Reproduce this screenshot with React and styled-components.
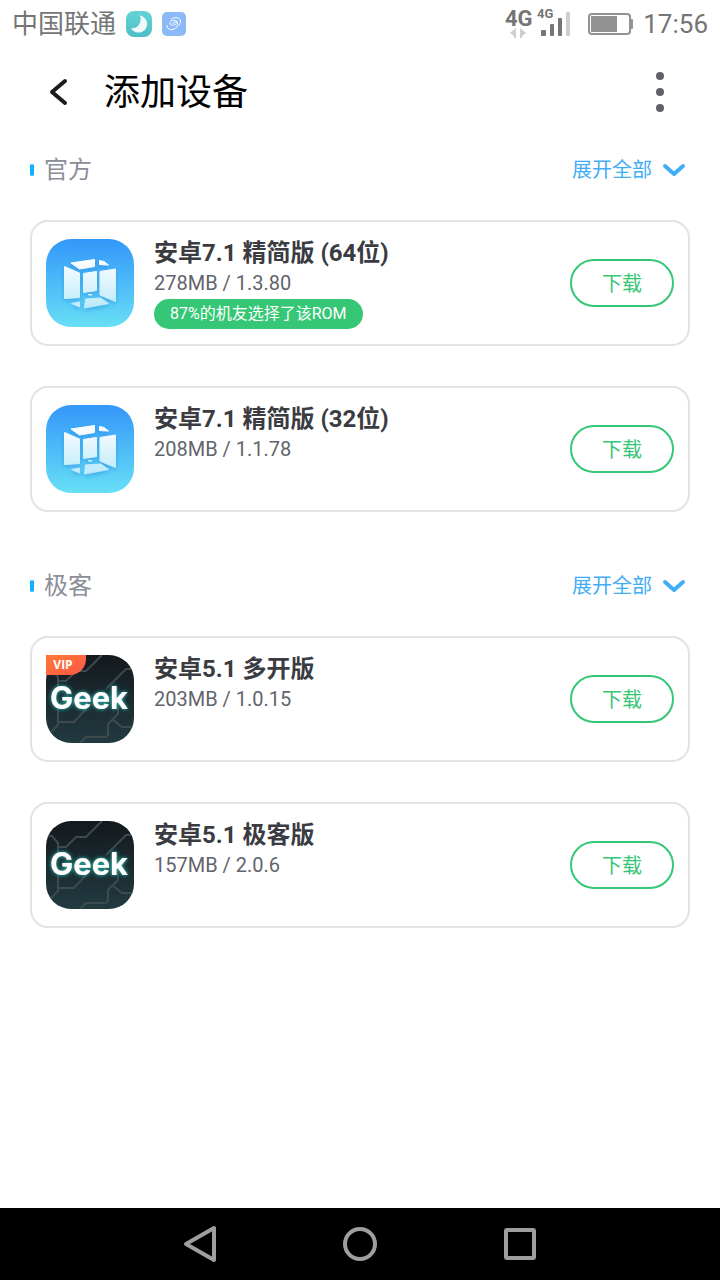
import React from "react";
import styled, { createGlobalStyle } from "styled-components";

const GlobalStyle = createGlobalStyle`
  *, *::before, *::after { box-sizing: border-box; }
  body {
    margin: 0;
    background: #fff;
    font-family: Roboto, "Noto Sans CJK SC", sans-serif;
  }
  button { font-family: inherit; cursor: pointer; }
  h1, h2, h3, p { margin: 0; font-weight: 400; }
  svg { display: block; flex: none; }
`;

const Page = styled.div`
  min-height: 100vh;
  display: flex;
  flex-direction: column;
  background: #fff;
`;

const StatusBar = styled.div`
  height: 48px;
  padding: 0 12px;
  display: flex;
  align-items: center;
  justify-content: space-between;
  color: #757575;
  font-size: 26px;
  line-height: 32px;
`;

const StatusGroup = styled.div`
  display: flex;
  align-items: center;
  gap: ${(p) => p.$gap}px;
`;

const Header = styled.header`
  height: 88px;
  padding: 0 40px;
  display: flex;
  align-items: center;
  gap: 24px;
`;

const IconButton = styled.button`
  width: 40px;
  height: 48px;
  padding: 0;
  border: 0;
  background: none;
  display: flex;
  align-items: center;
  justify-content: center;
`;

const PageTitle = styled.h1`
  flex: 1;
  padding-top: 2px;
  font-size: 36px;
  line-height: 48px;
  color: #000;
`;

const Main = styled.main`
  flex: 1;
  padding: 0 30px 40px;
  display: flex;
  flex-direction: column;
  gap: 40px;
`;

const SectionHead = styled.div`
  height: 68px;
  margin-bottom: 16px;
  display: flex;
  align-items: center;
  justify-content: space-between;
`;

const SectionTitle = styled.h2`
  display: flex;
  align-items: center;
  gap: 10px;
  font-size: 24px;
  line-height: 32px;
  color: #8b8e99;

  &::before {
    content: "";
    width: 4px;
    height: 12px;
    border-radius: 2px;
    background: #0ab2fd;
  }
`;

const ExpandButton = styled.button`
  padding: 0 4px 0 0;
  border: 0;
  background: none;
  display: flex;
  align-items: center;
  gap: 10px;
  font-size: 20px;
  line-height: 32px;
  color: #42adf7;
`;

const CardList = styled.ul`
  margin: 0;
  padding: 0;
  list-style: none;
  display: flex;
  flex-direction: column;
  gap: 40px;
`;

const Card = styled.li`
  min-height: 126px;
  padding: 14px 14px 15px;
  border: 2px solid #e3e3e3;
  border-radius: 18px;
  display: flex;
  align-items: center;
  gap: 20px;
`;

const CardInfo = styled.div`
  flex: 1;
  align-self: stretch;
  display: flex;
  flex-direction: column;
  align-items: flex-start;
`;

const CardTitle = styled.h3`
  font-size: 24px;
  line-height: 34px;
  font-weight: 700;
  color: #3a3c42;
`;

const CardMeta = styled.p`
  font-size: 20px;
  line-height: 26px;
  color: #62646d;
`;

const Badge = styled.p`
  margin-top: 3px;
  padding: 0 16px;
  border-radius: 16px;
  background: #35c775;
  color: #fff;
  font-size: 16px;
  line-height: 30px;
`;

const DownloadButton = styled.button`
  width: 104px;
  height: 48px;
  padding: 0;
  border: 2px solid #35c775;
  border-radius: 24px;
  background: #fff;
  color: #35c775;
  font-size: 20px;
`;

const NavBar = styled.nav`
  height: 72px;
  background: #000;
  display: flex;
  align-items: center;
  justify-content: center;
  gap: 120px;
`;

function MoonIcon() {
  return (
    <svg width="26" height="26" viewBox="0 0 26 26" aria-hidden="true">
      <defs>
        <linearGradient id="moonBg" x2="0" y2="1">
          <stop stopColor="#63d3d6" />
          <stop offset="1" stopColor="#50bfc5" />
        </linearGradient>
      </defs>
      <rect width="26" height="26" rx="8" fill="url(#moonBg)" />
      <path d="M13.8 4.5A8.6 8.6 0 1 1 5 17.2A8.9 8.9 0 0 0 13.8 4.5Z" fill="#f0fafa" />
    </svg>
  );
}

function SwirlIcon() {
  return (
    <svg width="24" height="24" viewBox="0 0 24 24" aria-hidden="true">
      <rect width="24" height="24" rx="5" fill="#8cb9f8" />
      <g fill="none" stroke="#fff" strokeWidth="1" strokeLinecap="round">
        <path d="M14.5 9C12 7.500 8 8.500 8 11.500C8 14.500 14.500 13 14.500 11C14.500 9.500 11 9.500 11 11.500" />
        <path d="M14.500 9C17 11 15.500 17 10 17.500C7 17.800 4.500 16 5 13.500" />
        <path d="M9 7.500C11.500 4.500 18.500 5 18.500 9C18.500 11 17.800 12.500 17 13.500" />
      </g>
    </svg>
  );
}

function NetworkIcon() {
  return (
    <svg width="66" height="48" viewBox="-1 -8 66 48" role="img" aria-label="4G">
      <g fill="#757575" fontFamily="Roboto, sans-serif" fontWeight="700">
        <text x="0" y="18" fontSize="22">4G</text>
        <text x="32" y="10" fontSize="13">4G</text>
      </g>
      <g fill="#cecece">
        <path d="M5 25L11 20V30H9V28Z" />
        <path d="M21 25L15 20V30H17V28Z" />
      </g>
      <g fill="#757575">
        <rect x="36" y="22" width="5" height="6" rx="1" />
        <rect x="45" y="16" width="4" height="12" rx="1" />
        <rect x="53" y="10" width="4" height="18" rx="1" />
      </g>
      <rect x="61" y="4" width="4" height="24" rx="1" fill="#cecece" />
    </svg>
  );
}

function BatteryIcon() {
  return (
    <svg width="45" height="22" viewBox="0 0 45 22" aria-hidden="true">
      <rect x="1" y="1" width="41" height="20" rx="3" fill="none" stroke="#929292" strokeWidth="2" />
      <rect x="3" y="3" width="26" height="16" fill="#929292" />
      <rect x="42" y="6" width="3" height="10" rx="1" fill="#929292" />
    </svg>
  );
}

function CubeLogo({ id }) {
  return (
    <svg width="88" height="88" viewBox="0 0 88 88" aria-hidden="true">
      <defs>
        <linearGradient id={`${id}Bg`} x2="0" y2="1">
          <stop stopColor="#3397fa" />
          <stop offset="1" stopColor="#68dff5" />
        </linearGradient>
        <linearGradient id={`${id}Face`} gradientUnits="userSpaceOnUse" x1="0" y1="20" x2="0" y2="70">
          <stop stopColor="#fff" />
          <stop offset="1" stopColor="#b9e9fb" />
        </linearGradient>
        <filter id={`${id}Shadow`} x="-20%" y="-20%" width="140%" height="140%">
          <feDropShadow dx="0" dy="2" stdDeviation="2" floodColor="#1779d8" floodOpacity=".4" />
        </filter>
      </defs>
      <rect width="88" height="88" rx="25" fill={`url(#${id}Bg)`} />
      <g
        fill={`url(#${id}Face)`}
        stroke={`url(#${id}Face)`}
        strokeWidth="1"
        strokeLinejoin="round"
        filter={`url(#${id}Shadow)`}
      >
        <path d="M18.500 27.500L33.500 34V58.500L18.500 59.500Z" />
        <path d="M37.500 34.500L50.500 32.500V51.500L37.500 53.500Z" />
        <path d="M54 32.500L69.500 30V62.500L54 56Z" />
        <path d="M25 24L48.500 20.500V27.500L33.500 30Z" />
        <path d="M53.500 21.500L58 22.500L62.500 26L53.500 25.500Z" />
        <path d="M42.500 55.500H46V56H42.500Z" />
        <path d="M25.500 64.500L33.500 63V68Z" />
        <path d="M39.500 60L54.500 59L62.500 64.500L38.500 69Z" />
      </g>
    </svg>
  );
}

function GeekLogo({ id, vip }) {
  return (
    <svg width="88" height="88" viewBox="0 0 88 88" role="img" aria-label="Geek">
      <defs>
        <linearGradient id={`${id}Bg`} x2="0" y2="1">
          <stop stopColor="#14191d" />
          <stop offset="1" stopColor="#213a40" />
        </linearGradient>
        <linearGradient id={`${id}Vip`} x2="1" y2="1">
          <stop stopColor="#ff7a35" />
          <stop offset="1" stopColor="#ff5548" />
        </linearGradient>
        <clipPath id={`${id}Clip`}>
          <rect width="88" height="88" rx="25" />
        </clipPath>
        <filter id={`${id}Glow`} x="-20%" y="-30%" width="140%" height="160%">
          <feDropShadow dx="0" dy="0" stdDeviation="2" floodColor="#20d0c8" floodOpacity="1" />
        </filter>
      </defs>
      <g clipPath={`url(#${id}Clip)`}>
        <rect width="88" height="88" fill={`url(#${id}Bg)`} />
        <g fill="none" stroke="#3d4a50" strokeWidth="2">
          <path d="M56 0L40 16H30L20 26H12V36" />
          <path d="M0 15H6L12 22V28" />
          <path d="M88 14H80L60 34" />
          <path d="M12 54V70L2 80" />
          <path d="M12 67H28L42 52" />
          <path d="M72 52V59L62 69V80L60 82H40L34 88" />
          <path d="M67 65L76 72H88" />
        </g>
        <text
          x="43"
          y="54"
          textAnchor="middle"
          fill="#fff"
          fontFamily="Inter, sans-serif"
          fontWeight="700"
          fontSize="31"
          filter={`url(#${id}Glow)`}
        >
          Geek
        </text>
      </g>
      {vip && (
        <>
          <path d="M0 0H40V4A16 16 0 0 1 24 20H0Z" fill={`url(#${id}Vip)`} />
          <text
            x="17"
            y="14"
            textAnchor="middle"
            fill="#fff"
            fontFamily="Open Sans, sans-serif"
            fontWeight="700"
            fontSize="12"
          >
            VIP
          </text>
        </>
      )}
    </svg>
  );
}

const sections = [
  {
    title: "官方",
    roms: [
      {
        name: "安卓7.1 精简版 (64位)",
        meta: "278MB / 1.3.80",
        badge: "87%的机友选择了该ROM",
        logo: <CubeLogo id="cube64" />,
      },
      {
        name: "安卓7.1 精简版 (32位)",
        meta: "208MB / 1.1.78",
        logo: <CubeLogo id="cube32" />,
      },
    ],
  },
  {
    title: "极客",
    roms: [
      { name: "安卓5.1 多开版", meta: "203MB / 1.0.15", logo: <GeekLogo id="geekMulti" vip /> },
      { name: "安卓5.1 极客版", meta: "157MB / 2.0.6", logo: <GeekLogo id="geek" /> },
    ],
  },
];

function RomCard({ rom }) {
  return (
    <Card>
      {rom.logo}
      <CardInfo>
        <CardTitle>{rom.name}</CardTitle>
        <CardMeta>{rom.meta}</CardMeta>
        {rom.badge && <Badge>{rom.badge}</Badge>}
      </CardInfo>
      <DownloadButton type="button">下载</DownloadButton>
    </Card>
  );
}

export default function App() {
  return (
    <Page>
      <GlobalStyle />
      <StatusBar>
        <StatusGroup $gap={10}>
          <span>中国联通</span>
          <MoonIcon />
          <SwirlIcon />
        </StatusGroup>
        <StatusGroup $gap={10}>
          <StatusGroup $gap={18}>
            <NetworkIcon />
            <BatteryIcon />
          </StatusGroup>
          <span>17:56</span>
        </StatusGroup>
      </StatusBar>

      <Header>
        <IconButton type="button" aria-label="返回">
          <svg width="40" height="40" viewBox="0 0 40 40" aria-hidden="true">
            <path
              d="M25 9L12 20L25 31"
              fill="none"
              stroke="#1a1c20"
              strokeWidth="4"
              strokeLinecap="round"
              strokeLinejoin="round"
            />
          </svg>
        </IconButton>
        <PageTitle>添加设备</PageTitle>
        <IconButton type="button" aria-label="更多">
          <svg width="8" height="40" viewBox="0 0 8 40" fill="#60606b" aria-hidden="true">
            <circle cx="4" cy="4" r="4" />
            <circle cx="4" cy="20" r="4" />
            <circle cx="4" cy="36" r="4" />
          </svg>
        </IconButton>
      </Header>

      <Main>
        {sections.map((section) => (
          <section key={section.title}>
            <SectionHead>
              <SectionTitle>{section.title}</SectionTitle>
              <ExpandButton type="button">
                展开全部
                <svg width="24" height="16" viewBox="0 0 24 16" aria-hidden="true">
                  <path
                    d="M3 4L12 12L21 4"
                    fill="none"
                    stroke="#42adf7"
                    strokeWidth="4"
                    strokeLinecap="round"
                    strokeLinejoin="round"
                  />
                </svg>
              </ExpandButton>
            </SectionHead>
            <CardList>
              {section.roms.map((rom) => (
                <RomCard key={rom.name} rom={rom} />
              ))}
            </CardList>
          </section>
        ))}
      </Main>

      <NavBar aria-label="系统导航">
        <IconButton type="button" aria-label="返回上一级">
          <svg width="40" height="40" viewBox="0 0 40 40" aria-hidden="true">
            <path
              d="M34 4V36L6 20Z"
              fill="none"
              stroke="#9e9e9e"
              strokeWidth="4"
              strokeLinejoin="round"
            />
          </svg>
        </IconButton>
        <IconButton type="button" aria-label="主屏幕">
          <svg width="40" height="40" viewBox="0 0 40 40" aria-hidden="true">
            <circle cx="20" cy="20" r="15" fill="none" stroke="#9e9e9e" strokeWidth="4" />
          </svg>
        </IconButton>
        <IconButton type="button" aria-label="最近任务">
          <svg width="40" height="40" viewBox="0 0 40 40" aria-hidden="true">
            <rect x="6" y="6" width="28" height="28" rx="1" fill="none" stroke="#9e9e9e" strokeWidth="4" strokeLinejoin="round" />
          </svg>
        </IconButton>
      </NavBar>
    </Page>
  );
}
